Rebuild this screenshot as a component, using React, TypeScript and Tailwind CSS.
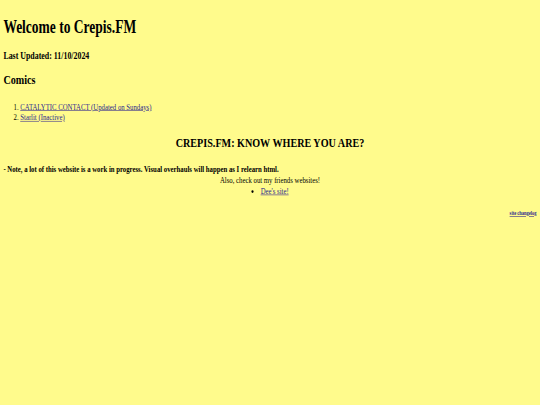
export default function App() {
  return (
    <div className="w-[540px] h-[405px] overflow-hidden bg-[#fffb8c]">
      {/* page laid out at 1280x720 and scaled down like the screenshot */}
      <div className="w-[1280px] h-[720px] origin-top-left scale-x-[0.421875] scale-y-[0.5625] bg-[#fffb8c] p-2 text-black font-['Liberation_Serif','Times_New_Roman',serif] text-[16px] leading-[1.15]">
        <h1 className="text-[32px] font-bold my-[21.44px]">Welcome to Crepis.FM</h1>
        <h3 className="text-[18.72px] font-bold my-[18.72px]">Last Updated: 11/10/2024</h3>
        <h2 className="text-[24px] font-bold my-[19.92px]">Comics</h2>
        <ol className="list-decimal pl-10 mt-[23px] mb-4 leading-[19.5px]">
          <li>
            <a href="#" className="text-[#2a1f8f] underline">CATALYTIC CONTACT (Updated on Sundays)</a>
          </li>
          <li>
            <a href="#" className="text-[#2a1f8f] underline">Starlit (Inactive)</a>
          </li>
        </ol>
        <h2 className="text-[24px] font-bold text-center mt-[21px] mb-[23.5px]">CREPIS.FM: KNOW WHERE YOU ARE?</h2>
        <div className="leading-[19.5px]">
          <p className="font-bold">- Note, a lot of this website is a work in progress. Visual overhauls will happen as I relearn html.</p>
          <div className="text-center">
            <p>Also, check out my friends websites!</p>
            <ul className="list-disc list-inside">
              <li>
                <a href="#" className="text-[#2a1f8f] underline">Dee's site!</a>
              </li>
            </ul>
          </div>
        </div>
        <h6 className="text-[10.72px] font-bold text-right mt-[24px]">
          <a href="#" className="text-[#2a1f8f] underline">site changelog</a>
        </h6>
      </div>
    </div>
  );
}
